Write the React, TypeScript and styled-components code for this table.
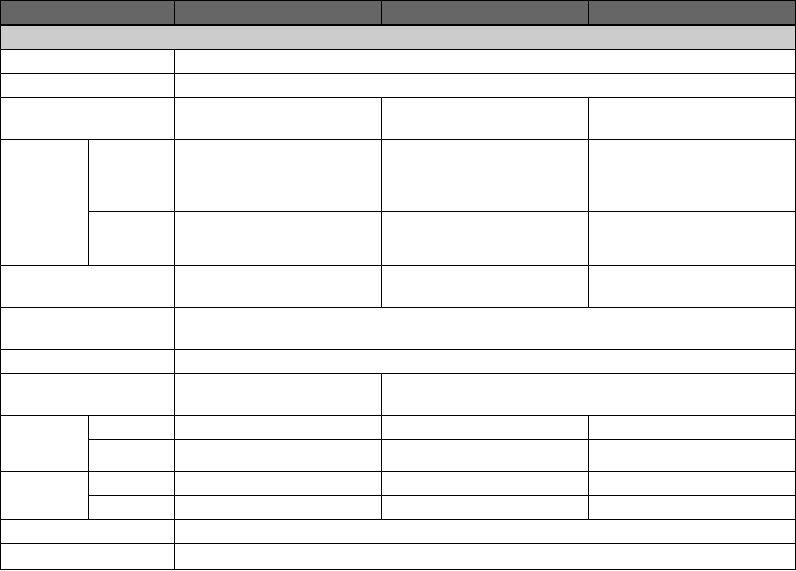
import React from 'react'
import styled, { createGlobalStyle } from 'styled-components'

const GlobalStyle = createGlobalStyle`
  html, body {
    margin: 0;
    padding: 0;
    background: #ffffff;
    font-family: 'Liberation Sans', Arial, sans-serif;
  }
`

const Grid = styled.div`
  display: grid;
  grid-template-columns: 87px 85px 206px 206px 206px;
  grid-template-rows: 24px 23px 23px 23px 41px 71px 53px 41px 41px 23px 41px 23px 31px 23px 23px 23px 25px;
  gap: 1px;
  padding: 1px;
  width: max-content;
  background: #000000;
`

type Tone = 'head' | 'band' | 'plain'

const tones: Record<Tone, string> = {
  head: '#666666',
  band: '#cccccc',
  plain: '#ffffff',
}

const Cell = styled.div<{ $span?: number; $rows?: number; $tone?: Tone }>`
  grid-column: span ${(p) => p.$span ?? 1};
  grid-row: span ${(p) => p.$rows ?? 1};
  background: ${(p) => tones[p.$tone ?? 'plain']};
  border-bottom: ${(p) => (p.$tone === 'head' ? '1px solid #000000' : 'none')};
`

// each row lists [colspan, rowspan] for its cells, in order
const layout: [number, number][][] = [
  [[2, 1], [1, 1], [1, 1], [1, 1]],
  [[5, 1]],
  [[2, 1], [3, 1]],
  [[2, 1], [3, 1]],
  [[2, 1], [1, 1], [1, 1], [1, 1]],
  [[1, 2], [1, 1], [1, 1], [1, 1], [1, 1]],
  [[1, 1], [1, 1], [1, 1], [1, 1]],
  [[2, 1], [1, 1], [1, 1], [1, 1]],
  [[2, 1], [3, 1]],
  [[2, 1], [3, 1]],
  [[2, 1], [1, 1], [2, 1]],
  [[1, 2], [1, 1], [1, 1], [1, 1], [1, 1]],
  [[1, 1], [1, 1], [1, 1], [1, 1]],
  [[1, 2], [1, 1], [1, 1], [1, 1], [1, 1]],
  [[1, 1], [1, 1], [1, 1], [1, 1]],
  [[2, 1], [3, 1]],
  [[2, 1], [3, 1]],
]

const App = () => {
  return (
    <>
      <GlobalStyle />
      <Grid>
        {layout.map((row, r) =>
          row.map(([span, rows], c) => (
            <Cell
              key={`${r}-${c}`}
              $span={span}
              $rows={rows}
              $tone={r === 0 ? 'head' : r === 1 ? 'band' : 'plain'}
            />
          ))
        )}
      </Grid>
    </>
  )
}

export default App
